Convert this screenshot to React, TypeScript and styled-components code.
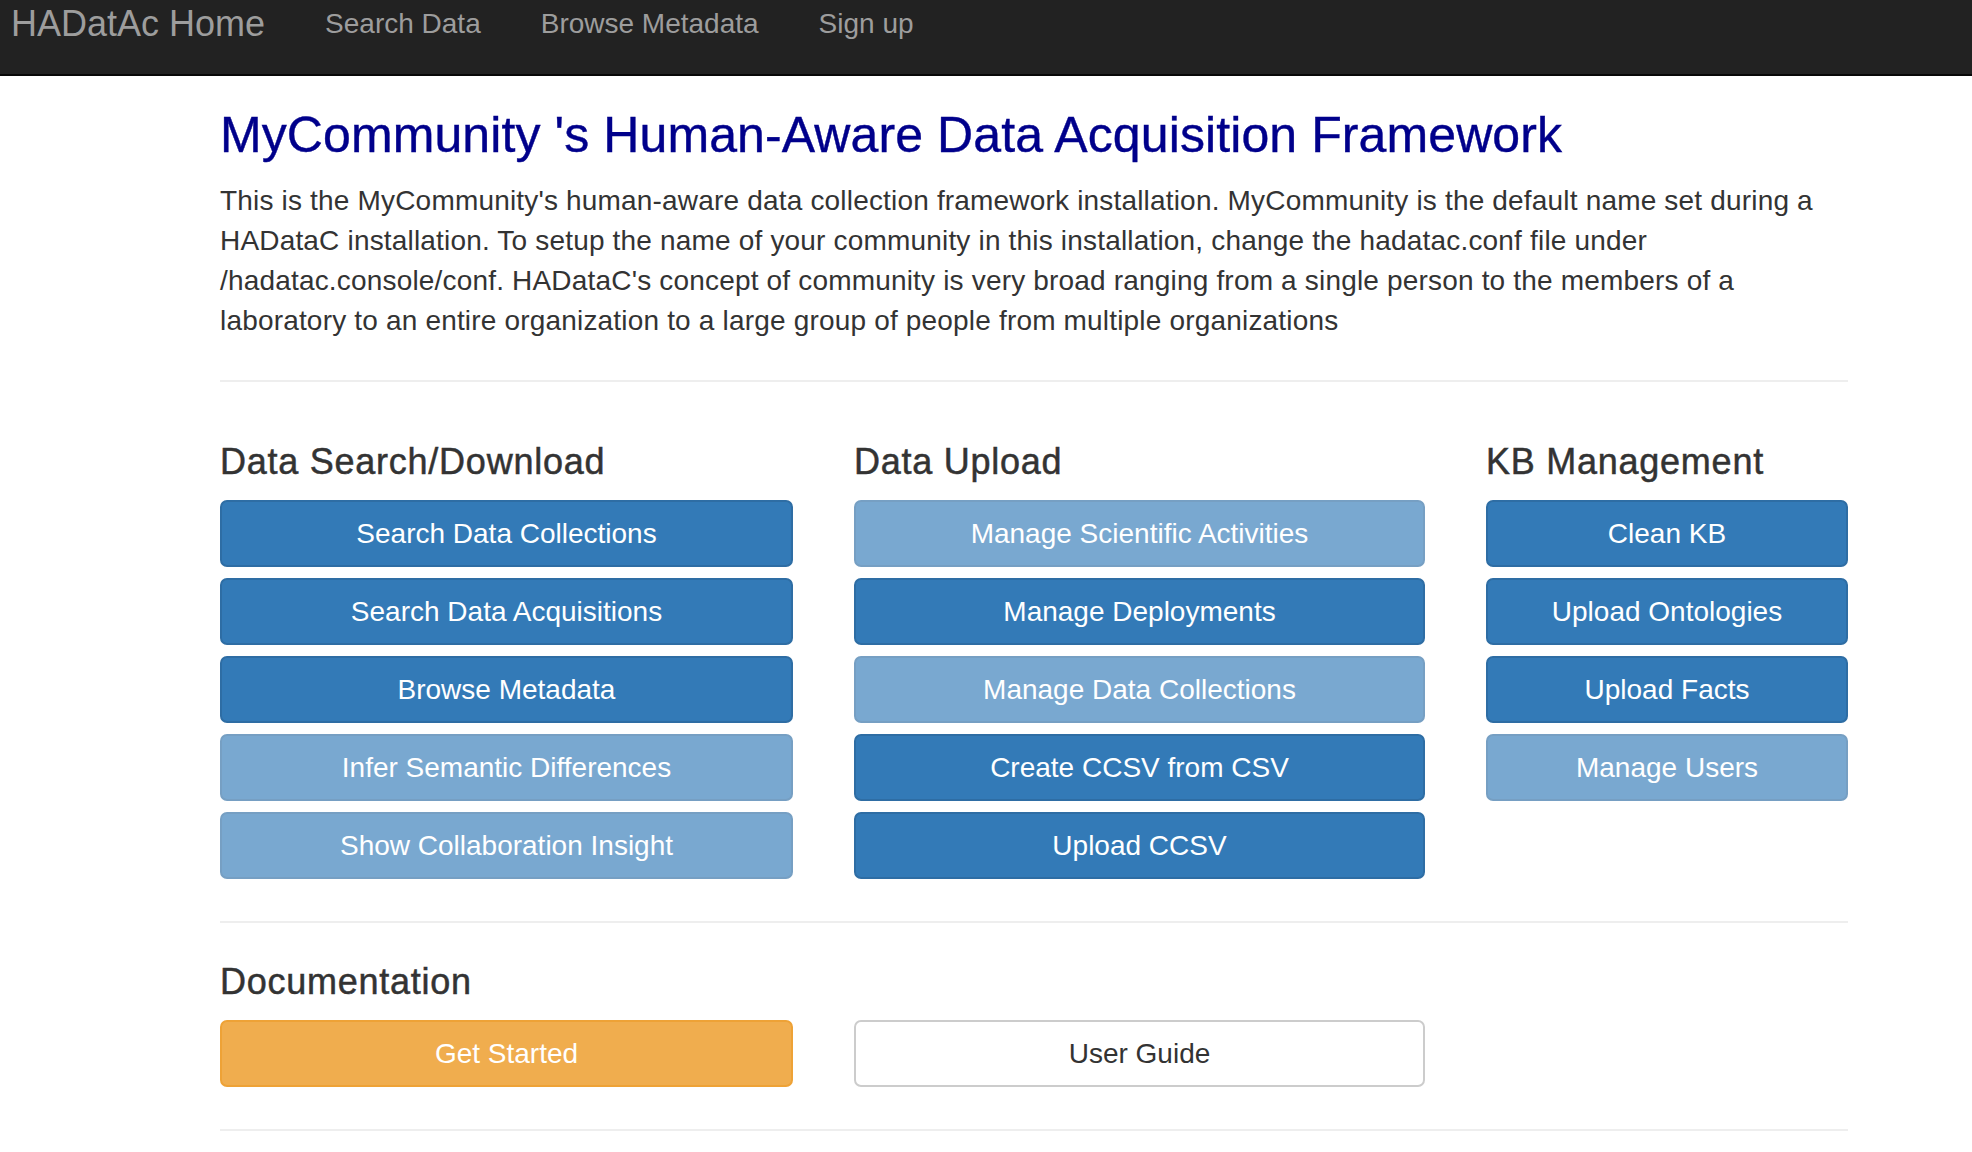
import React from "react";
import styled, { createGlobalStyle, css } from "styled-components";

const GlobalStyle = createGlobalStyle`
  html, body {
    margin: 0;
    padding: 0;
    background: #ffffff;
  }
  body {
    font-family: "Liberation Sans", Arial, Helvetica, sans-serif;
    color: #333333;
  }
  * { box-sizing: border-box; }
`;

const Page = styled.div`
  width: 1972px;
  min-height: 1152px;
  background: #ffffff;
`;

const Navbar = styled.nav`
  height: 76px;
  background: #222222;
  border-bottom: 2px solid #080808;
  display: flex;
  align-items: flex-start;
  padding-left: 11px;
`;

const Brand = styled.a`
  font-size: 36px;
  line-height: 40px;
  padding-top: 4px;
  color: #9d9d9d;
  text-decoration: none;
  margin-right: 30px;
`;

const NavLink = styled.a`
  font-size: 28px;
  line-height: 40px;
  padding: 4px 30px 0;
  color: #9d9d9d;
  text-decoration: none;
`;

const Container = styled.main`
  display: flex;
  flex-direction: column;
  margin-left: 220px;
  width: 1628px;
`;

const Title = styled.h2`
  margin: 32px 0 0;
  font-size: 50px;
  line-height: 55px;
  font-weight: 400;
  letter-spacing: 0.1px;
  color: #00008b;
  -webkit-text-stroke: 0.4px #00008b;
`;

const Lead = styled.p`
  margin: 18px 0 0;
  font-size: 28px;
  line-height: 40px;
  letter-spacing: 0.18px;
  color: #333333;
`;

const Rule = styled.hr<{ $top: number }>`
  margin: ${(p) => p.$top}px 0 0;
  border: 0;
  border-top: 2px solid #eeeeee;
  height: 0;
  width: 100%;
`;

const Columns = styled.div<{ $top?: number }>`
  display: grid;
  grid-template-columns: 573px 571px 362px;
  column-gap: 61px;
  margin-top: ${(p) => p.$top ?? 0}px;
  align-items: start;
`;

const Column = styled.section`
  display: flex;
  flex-direction: column;
`;

const SectionTitle = styled.h4<{ $top?: number }>`
  margin: ${(p) => p.$top ?? 0}px 0 0;
  font-size: 36px;
  line-height: 40px;
  font-weight: 400;
  letter-spacing: 0.75px;
  color: #333333;
  -webkit-text-stroke: 0.5px #333333;
`;

const ButtonStack = styled.div`
  display: flex;
  flex-direction: column;
  gap: 11px;
  margin-top: 18px;
`;

type Variant = "primary" | "muted" | "warning" | "default";

const variants: Record<Variant, ReturnType<typeof css>> = {
  primary: css`
    background: #337ab7;
    border-color: #2e6da4;
    color: #ffffff;
  `,
  muted: css`
    background: #337ab7;
    border-color: #2e6da4;
    color: #ffffff;
    opacity: 0.65;
  `,
  warning: css`
    background: #f0ad4e;
    border-color: #eea236;
    color: #ffffff;
  `,
  default: css`
    background: #ffffff;
    border-color: #cccccc;
    color: #333333;
  `,
};

const Button = styled.a<{ $variant: Variant }>`
  display: flex;
  align-items: center;
  justify-content: center;
  height: 67px;
  border: 2px solid transparent;
  border-radius: 7px;
  font-size: 28px;
  line-height: 40px;
  text-decoration: none;
  white-space: nowrap;
  ${(p) => variants[p.$variant]}
`;

type Item = { label: string; variant: Variant };

const groups: { title: string; items: Item[] }[] = [
  {
    title: "Data Search/Download",
    items: [
      { label: "Search Data Collections", variant: "primary" },
      { label: "Search Data Acquisitions", variant: "primary" },
      { label: "Browse Metadata", variant: "primary" },
      { label: "Infer Semantic Differences", variant: "muted" },
      { label: "Show Collaboration Insight", variant: "muted" },
    ],
  },
  {
    title: "Data Upload",
    items: [
      { label: "Manage Scientific Activities", variant: "muted" },
      { label: "Manage Deployments", variant: "primary" },
      { label: "Manage Data Collections", variant: "muted" },
      { label: "Create CCSV from CSV", variant: "primary" },
      { label: "Upload CCSV", variant: "primary" },
    ],
  },
  {
    title: "KB Management",
    items: [
      { label: "Clean KB", variant: "primary" },
      { label: "Upload Ontologies", variant: "primary" },
      { label: "Upload Facts", variant: "primary" },
      { label: "Manage Users", variant: "muted" },
    ],
  },
];

export default function App() {
  return (
    <Page>
      <GlobalStyle />
      <Navbar>
        <Brand href="#">HADatAc Home</Brand>
        <NavLink href="#">Search Data</NavLink>
        <NavLink href="#">Browse Metadata</NavLink>
        <NavLink href="#">Sign up</NavLink>
      </Navbar>
      <Container>
        <Title>MyCommunity 's Human-Aware Data Acquisition Framework</Title>
        <Lead>
          This is the MyCommunity's human-aware data collection framework installation. MyCommunity is the
          default name set during a HADataC installation. To setup the name of your community in this
          installation, change the hadatac.conf file under /hadatac.console/conf. HADataC's concept of
          community is very broad ranging from a single person to the members of a laboratory to an entire
          organization to a large group of people from multiple organizations
        </Lead>
        <Rule $top={39} />
        <Columns $top={60}>
          {groups.map((g) => (
            <Column key={g.title}>
              <SectionTitle>{g.title}</SectionTitle>
              <ButtonStack>
                {g.items.map((it) => (
                  <Button key={it.label} href="#" $variant={it.variant}>
                    {it.label}
                  </Button>
                ))}
              </ButtonStack>
            </Column>
          ))}
        </Columns>
        <Rule $top={42} />
        <SectionTitle $top={39}>Documentation</SectionTitle>
        <Columns $top={18}>
          <Button href="#" $variant="warning">Get Started</Button>
          <Button href="#" $variant="default">User Guide</Button>
        </Columns>
        <Rule $top={42} />
      </Container>
    </Page>
  );
}
